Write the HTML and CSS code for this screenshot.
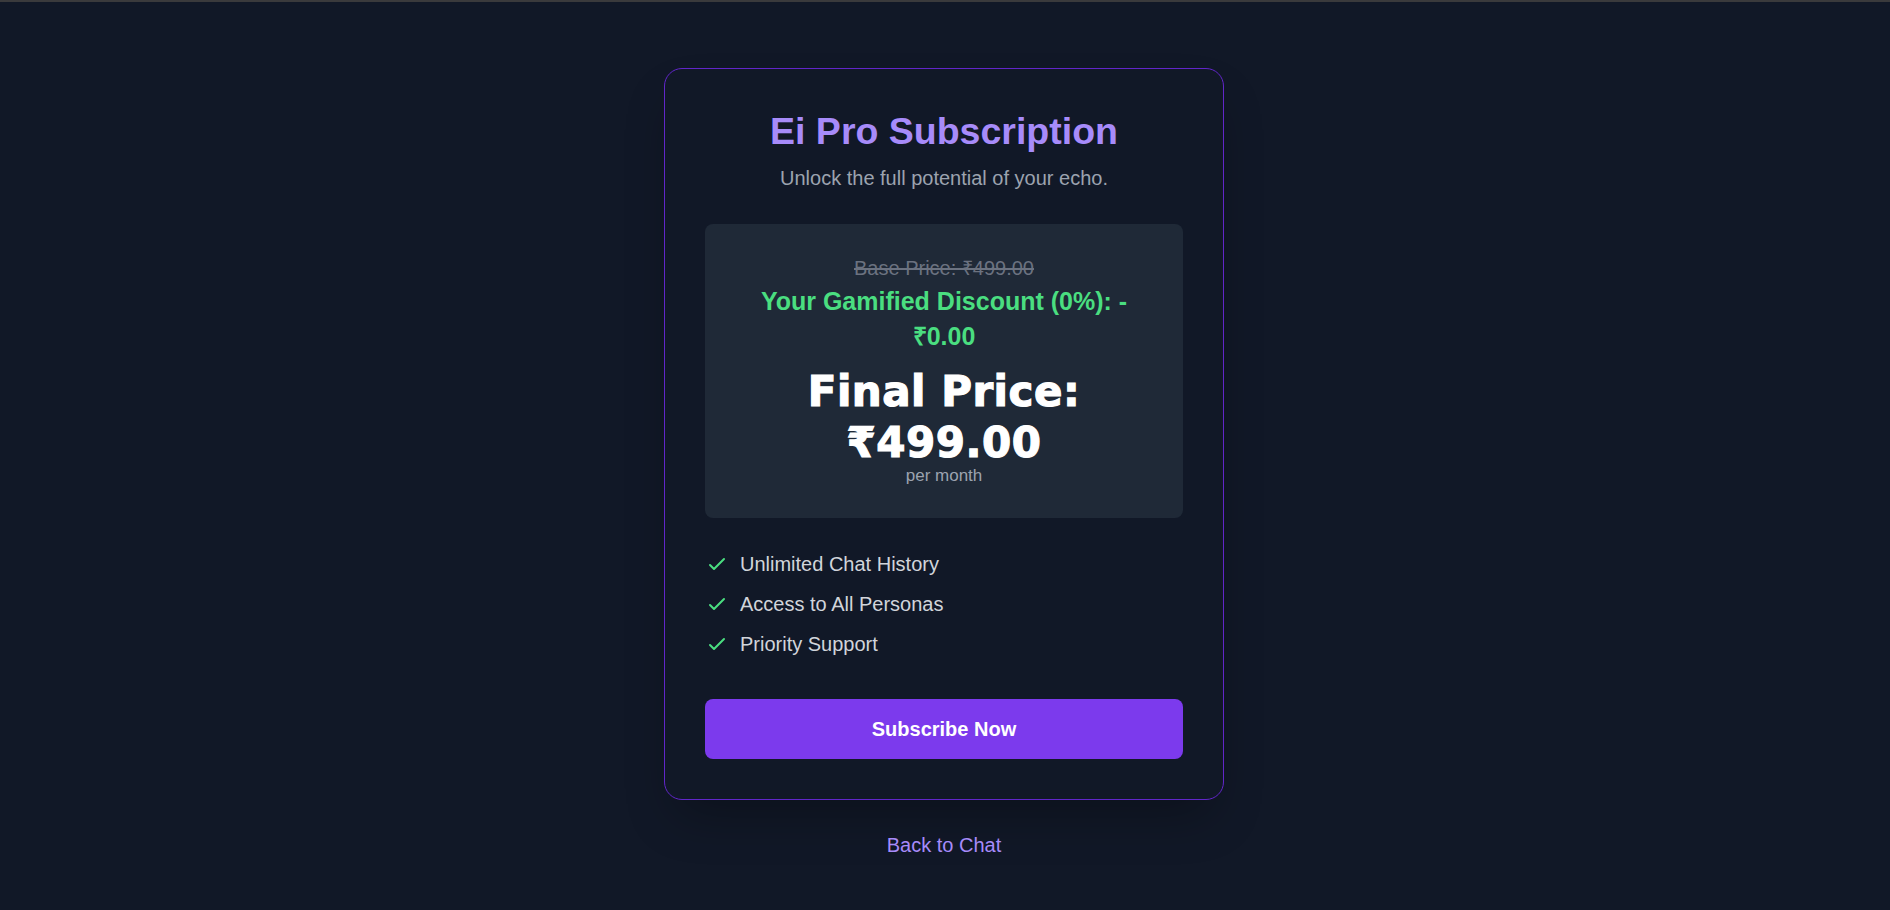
FILE: index.html
```html
<!DOCTYPE html>
<html lang="en">
<head>
<meta charset="utf-8">
<title>Ei Pro Subscription</title>
<link rel="stylesheet" href="styles.css">
</head>
<body>
<div class="topbar"></div>
<main class="page">
  <section class="card">
    <h1 class="title">Ei Pro Subscription</h1>
    <p class="subtitle">Unlock the full potential of your echo.</p>
    <div class="price-box">
      <p class="base-price">Base Price: ₹499.00</p>
      <p class="discount">Your Gamified Discount (0%): -₹0.00</p>
      <p class="final-price">Final Price: ₹499.00</p>
      <p class="per-month">per month</p>
    </div>
    <ul class="features">
      <li class="feature"><svg class="check" viewBox="0 0 24 24" fill="none" stroke="currentColor" stroke-width="2" stroke-linecap="round" stroke-linejoin="round"><path d="M5 13l4 4L19 7"/></svg><span>Unlimited Chat History</span></li>
      <li class="feature"><svg class="check" viewBox="0 0 24 24" fill="none" stroke="currentColor" stroke-width="2" stroke-linecap="round" stroke-linejoin="round"><path d="M5 13l4 4L19 7"/></svg><span>Access to All Personas</span></li>
      <li class="feature"><svg class="check" viewBox="0 0 24 24" fill="none" stroke="currentColor" stroke-width="2" stroke-linecap="round" stroke-linejoin="round"><path d="M5 13l4 4L19 7"/></svg><span>Priority Support</span></li>
    </ul>
    <button class="subscribe" type="button">Subscribe Now</button>
  </section>
  <a class="back" href="#">Back to Chat</a>
</main>
</body>
</html>
```
FILE: styles.css
```css
* { box-sizing: border-box; }
html, body { margin: 0; padding: 0; }
body {
  background: #111827;
  font-family: "Liberation Sans", Arial, sans-serif;
  color: #d1d5db;
  min-height: 910px;
}
.topbar {
  height: 2px;
  background: #3a3a3c;
}
.page {
  display: flex;
  flex-direction: column;
  align-items: center;
  padding-top: 66px;
  padding-right: 2px;
}
.card {
  width: 560px;
  border: 1px solid #6126c9;
  border-radius: 18px;
  background: #111827;
  padding: 40px;
  box-shadow: 0 25px 50px -12px rgba(0, 0, 0, 0.3);
  display: flex;
  flex-direction: column;
}
.title {
  margin: 0;
  font-size: 37.5px;
  line-height: 44px;
  font-weight: 700;
  color: #a78bfa;
  text-align: center;
}
.subtitle {
  margin: 11px 0 0;
  font-size: 20px;
  line-height: 28px;
  color: #9ca3af;
  text-align: center;
}
.price-box {
  margin-top: 32px;
  background: #1f2937;
  border-radius: 8px;
  padding: 30px 32px 32px;
  text-align: center;
}
.price-box p { margin: 0; }
.base-price {
  font-size: 20px;
  line-height: 28px;
  color: #6b7280;
  text-decoration: line-through;
}
.price-box .discount {
  margin-top: 2px;
  font-size: 25px;
  line-height: 35px;
  font-weight: 700;
  color: #4ade80;
}
.price-box .final-price {
  margin-top: 12px;
  font-family: "DejaVu Sans", sans-serif;
  font-size: 42px;
  line-height: 51px;
  font-weight: 700;
  letter-spacing: 0.5px;
  color: #ffffff;
  -webkit-text-stroke: 1.2px #ffffff;
}
.price-box .per-month {
  margin-top: -2px;
  font-size: 17px;
  line-height: 20px;
  color: #9ca3af;
}
.features {
  list-style: none;
  margin: 32px 0 0;
  padding: 0;
  display: flex;
  flex-direction: column;
  gap: 12px;
}
.feature {
  display: flex;
  align-items: center;
  font-size: 20px;
  line-height: 28px;
  color: #d1d5db;
}
.check {
  width: 24px;
  height: 24px;
  color: #4ade80;
  margin-right: 11px;
  flex: none;
}
.subscribe {
  margin-top: 41px;
  width: 100%;
  height: 60px;
  border: none;
  border-radius: 8px;
  background: #7c3aed;
  color: #ffffff;
  font-family: "Liberation Sans", Arial, sans-serif;
  font-size: 20px;
  font-weight: 700;
  cursor: pointer;
}
.back {
  margin-top: 31px;
  font-size: 20px;
  line-height: 28px;
  color: #a78bfa;
  text-decoration: none;
}
```
